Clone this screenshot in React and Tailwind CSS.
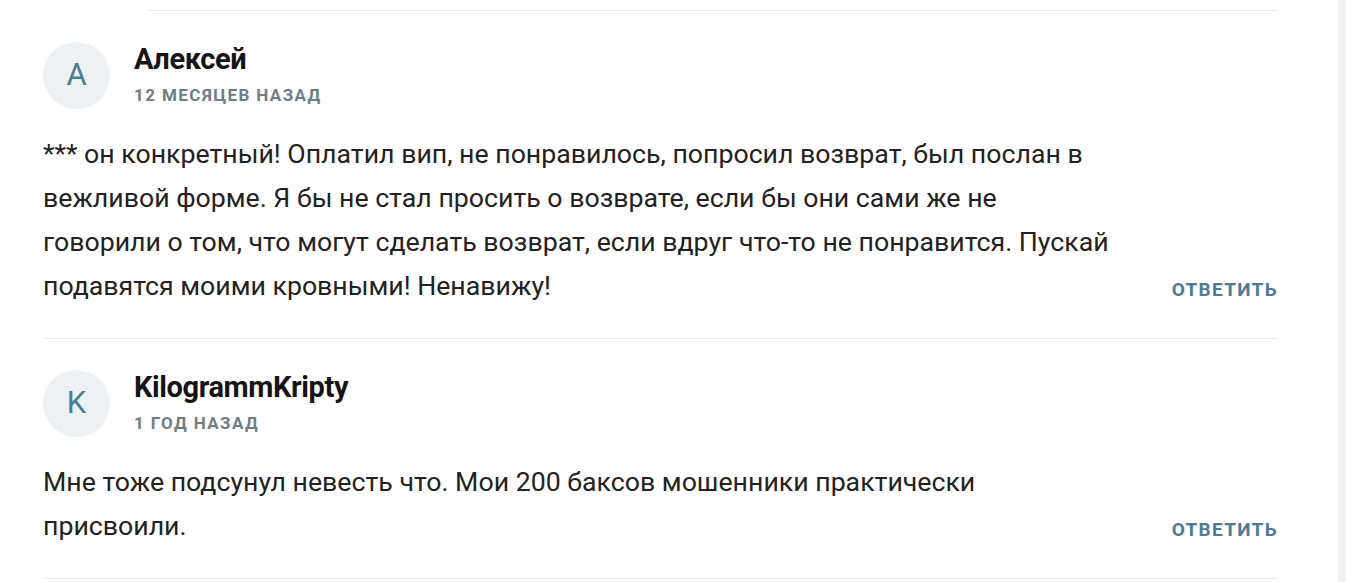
// Лента комментариев: аватар с буквой, имя, давность, текст и ссылка «Ответить».

const comments = [
  {
    id: 1,
    letter: "А",
    name: "Алексей",
    ago: "12 месяцев назад",
    text:
      "*** он конкретный! Оплатил вип, не понравилось, попросил возврат, был послан в вежливой форме. Я бы не стал просить о возврате, если бы они сами же не говорили о том, что могут сделать возврат, если вдруг что-то не понравится. Пускай подавятся моими кровными! Ненавижу!",
  },
  {
    id: 2,
    letter: "K",
    name: "KilogrammKripty",
    ago: "1 год назад",
    text: "Мне тоже подсунул невесть что. Мои 200 баксов мошенники практически присвоили.",
  },
];

function Comment({ c }) {
  return (
    <div className="border-b border-[#ececec] pt-[31px] pb-[30px]">
      <div className="flex items-center gap-[24px]">
        <div className="w-[67px] h-[67px] rounded-full bg-[#eef1f3] flex items-center justify-center text-[31px] text-[#4b7c96]">
          {c.letter}
        </div>
        <div className="-mt-[2px]">
          <div className="text-[29px] leading-[30px] font-bold text-[#141414] tracking-[-0.4px]">
            {c.name}
          </div>
          <div className="mt-[11px] text-[17px] leading-[20px] font-bold uppercase tracking-[1.4px] text-[#6f7d85]">
            {c.ago}
          </div>
        </div>
      </div>
      <div className="mt-[23px] flex items-end">
        <p className="w-[1068px] text-[26.7px] leading-[44px] text-[#222]">{c.text}</p>
        <button
          type="button"
          className="ml-auto mb-[6px] text-[19px] leading-[24px] font-bold uppercase tracking-[1.3px] text-[#4b7c96]"
        >
          Ответить
        </button>
      </div>
    </div>
  );
}

export default function App() {
  return (
    <div
      className="flex h-[582px] bg-white overflow-hidden"
      style={{ fontFamily: "Roboto, 'Liberation Sans', sans-serif" }}
    >
      <div className="flex-1">
        <div className="ml-[43px] w-[1235px]">
          <div className="mt-[10px] ml-[105px] border-t border-[#ececec]" />
          {comments.map((c) => (
            <Comment key={c.id} c={c} />
          ))}
        </div>
      </div>
      <div className="w-[8px] bg-[#f1f2f2]" />
    </div>
  );
}
